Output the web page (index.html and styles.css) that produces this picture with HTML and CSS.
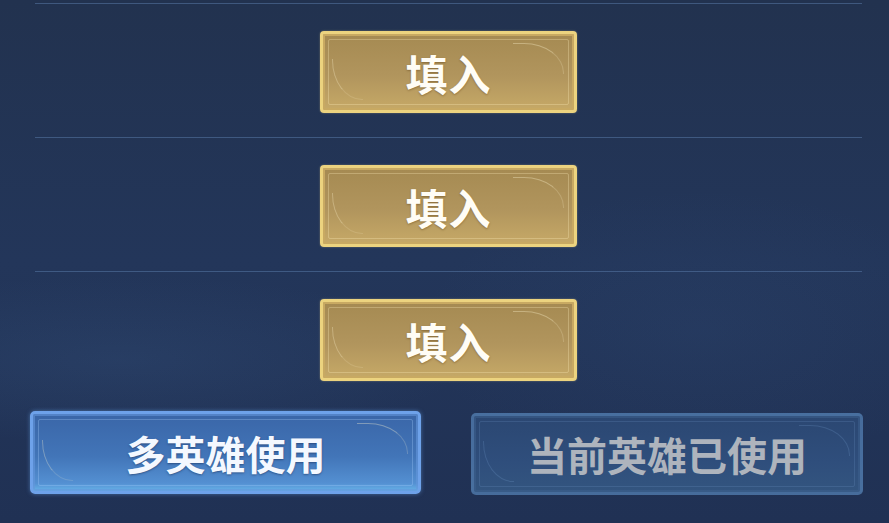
FILE: index.html
```html
<!DOCTYPE html>
<html lang="zh">
<head>
<meta charset="utf-8">
<link rel="stylesheet" href="styles.css">
</head>
<body>
<div class="page">
  <div class="slots">
    <div class="slot"><button class="btn-gold"><span class="deco"></span>填入</button></div>
    <div class="slot"><button class="btn-gold"><span class="deco"></span>填入</button></div>
    <div class="slot"><button class="btn-gold"><span class="deco"></span>填入</button></div>
  </div>
  <div class="actions">
    <button class="btn-blue"><span class="deco"></span>多英雄使用</button>
    <button class="btn-muted"><span class="deco"></span>当前英雄已使用</button>
  </div>
</div>
</body>
</html>
```

FILE: styles.css
```css
* { box-sizing: border-box; }
html, body {
  margin: 0;
  padding: 0;
  width: 889px;
  height: 523px;
  overflow: hidden;
}
body {
  font-family: "Noto Sans CJK SC", "Noto Sans", sans-serif;
  background:
    radial-gradient(ellipse 500px 120px at 120px 360px, rgba(70,110,160,0.16), transparent 70%),
    radial-gradient(ellipse 400px 200px at 700px 330px, rgba(60,95,145,0.12), transparent 70%),
    linear-gradient(180deg, #22324f 0%, #23365a 50%, #203154 100%);
}
.page {
  padding-top: 3px;
}
.slots {
  margin: 0 27px 0 35px;
}
.slot {
  border-top: 1px solid rgba(88,120,165,0.55);
  padding: 27px 0 24px;
  display: flex;
  justify-content: center;
}
button {
  font-family: inherit;
  font-weight: 700;
  border: none;
  cursor: pointer;
  position: relative;
  display: flex;
  align-items: center;
  justify-content: center;
  padding: 0;
}
.btn-gold {
  width: 257px;
  height: 82px;
  border-radius: 4px;
  border: 3px solid #ecd37f;
  background: linear-gradient(180deg, #a58a52 0%, #b1955d 55%, #c6a967 100%);
  box-shadow: inset 0 0 0 2px #c8a962, 0 0 2px rgba(255,230,150,0.4);
  color: #fffdf6;
  font-size: 42px;
  letter-spacing: 1px;
  text-shadow: 0 1px 2px rgba(90,60,20,0.45);
}
.deco {
  position: absolute;
  inset: 5px;
  border: 1px solid rgba(255,240,190,0.3);
  border-radius: 2px;
  pointer-events: none;
}
.deco::before {
  content: "";
  position: absolute;
  right: 4px;
  top: 3px;
  width: 50px;
  height: 30px;
  border-top: 1px solid rgba(255,245,210,0.35);
  border-right: 1px solid rgba(255,245,210,0.2);
  border-radius: 0 40px 0 0 / 0 30px 0 0;
}
.deco::after {
  content: "";
  position: absolute;
  left: 3px;
  bottom: 4px;
  width: 30px;
  height: 40px;
  border-left: 1px solid rgba(255,245,210,0.3);
  border-bottom: 1px solid rgba(255,245,210,0.15);
  border-radius: 0 0 0 30px / 0 0 0 40px;
}
.actions {
  display: flex;
  gap: 50px;
  margin: 6px 26px 0 30px;
  align-items: flex-start;
}
.btn-blue {
  width: 391px;
  height: 83px;
  border-radius: 5px;
  border: 3px solid #6ea2ea;
  background: linear-gradient(180deg, #3a66a8 0%, #4275b8 55%, #5490d2 90%, #67b3e8 100%);
  box-shadow: inset 0 0 0 2px rgba(100,150,220,0.6), 0 0 4px rgba(110,170,240,0.5);
  color: #f4f8ff;
  font-size: 40px;
  text-shadow: 0 1px 2px rgba(20,40,80,0.5);
}
.btn-blue .deco { border-color: rgba(170,210,255,0.3); }
.btn-muted {
  width: 392px;
  height: 82px;
  margin-top: 2px;
  border-radius: 5px;
  border: 3px solid rgba(80,120,170,0.75);
  background: linear-gradient(180deg, #2b4772 0%, #2f4e7c 60%, #33557f 100%);
  box-shadow: inset 0 0 0 2px rgba(60,95,140,0.6);
  color: #aeb4bd;
  font-size: 40px;
}
.btn-muted .deco { border-color: rgba(120,160,210,0.2); }
.btn-muted .deco::before, .btn-muted .deco::after { border-color: rgba(140,180,230,0.18); }
```
